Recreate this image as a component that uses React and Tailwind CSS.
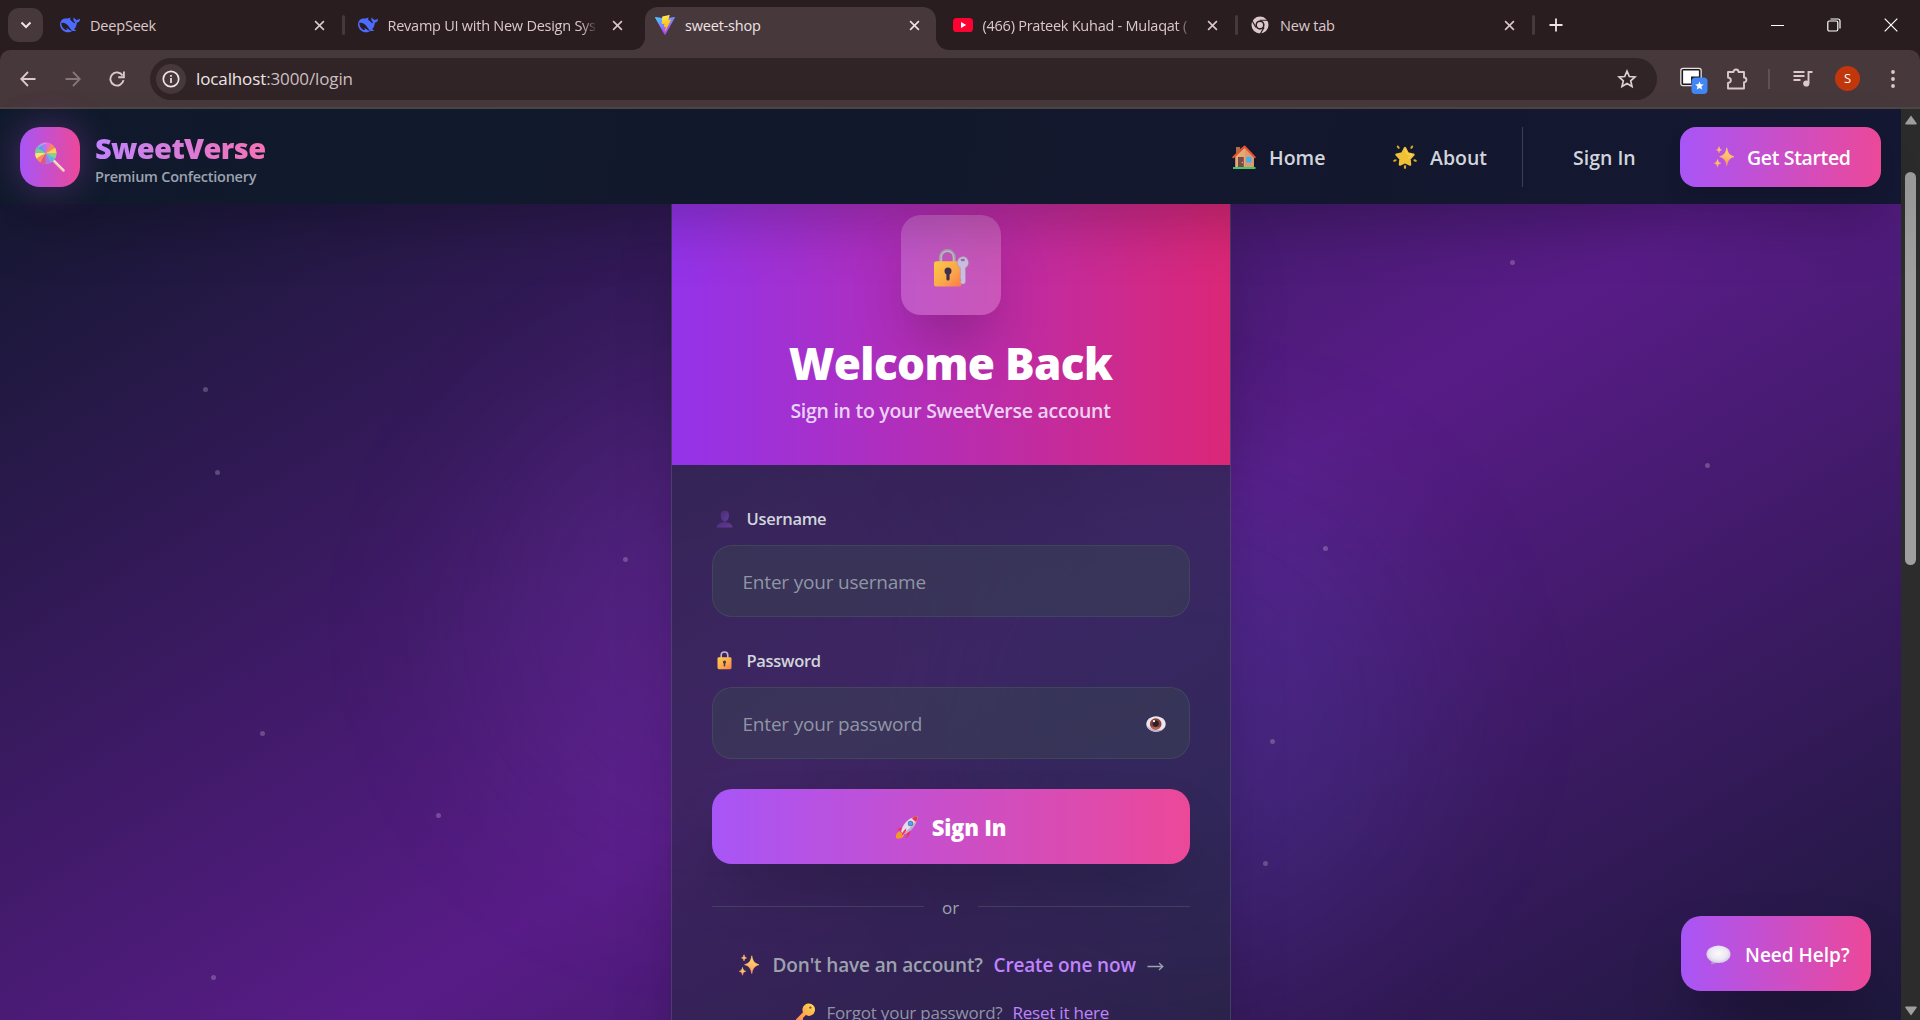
import React from "react";

/* ---------- favicons and browser glyphs ---------- */

function DeepSeekIcon() {
  return (
    <svg viewBox="0 0 24 24" className="h-5 w-5 shrink-0" fill="#4d6bfe" fillRule="evenodd">
      <path d="M23.748 4.482c-.254-.124-.364.113-.512.234-.051.039-.094.09-.137.136-.372.397-.806.657-1.373.626-.829-.046-1.537.214-2.163.848-.133-.782-.575-1.248-1.247-1.548-.352-.156-.708-.311-.955-.65-.172-.241-.219-.51-.305-.774-.055-.16-.11-.323-.293-.35-.2-.031-.278.136-.356.276-.313.572-.434 1.202-.422 1.84.027 1.436.633 2.58 1.838 3.393.137.093.172.187.129.323-.082.28-.18.552-.266.833-.055.179-.137.217-.329.14a5.526 5.526 0 01-1.736-1.18c-.857-.828-1.631-1.742-2.597-2.458a11.365 11.365 0 00-.689-.471c-.985-.957.13-1.743.388-1.836.27-.098.093-.432-.779-.428-.872.004-1.67.295-2.687.684a3.055 3.055 0 01-.465.137 9.597 9.597 0 00-2.883-.102c-1.885.21-3.39 1.102-4.497 2.623C.082 8.606-.231 10.684.152 12.85c.403 2.284 1.569 4.175 3.36 5.653 1.858 1.533 3.997 2.284 6.438 2.14 1.482-.085 3.133-.284 4.994-1.86.47.234.962.327 1.78.397.63.059 1.236-.03 1.705-.128.735-.156.684-.837.419-.961-2.155-1.004-1.682-.595-2.113-.926 1.096-1.296 2.746-2.642 3.392-7.003.05-.347.007-.565 0-.845-.004-.17.035-.237.23-.256a4.173 4.173 0 001.545-.475c1.396-.763 1.96-2.015 2.093-3.517.02-.23-.004-.467-.247-.588zM11.581 18c-2.089-1.642-3.102-2.183-3.52-2.16-.392.024-.321.471-.235.763.09.288.207.486.371.739.114.167.192.416-.113.603-.673.416-1.842-.14-1.897-.167-1.361-.802-2.5-1.86-3.301-3.307-.774-1.393-1.224-2.887-1.298-4.482-.02-.386.093-.522.477-.592a4.696 4.696 0 011.529-.039c2.132.312 3.946 1.265 5.468 2.774.868.86 1.525 1.887 2.202 2.891.72 1.066 1.494 2.082 2.48 2.914.348.292.625.514.891.677-.802.09-2.14.11-3.054-.614z" />
      <path d="M12.6 11.4l1.7.5.3 1.4-.9.5z" fill="#4d6bfe" />
    </svg>
  );
}

function ViteIcon() {
  return (
    <svg viewBox="0 0 24 24" className="h-5 w-5 shrink-0">
      <defs>
        <linearGradient id="viteBody" x1="0" y1="0" x2="0.6" y2="1">
          <stop offset="0" stopColor="#41d1ff" />
          <stop offset="1" stopColor="#bd34fe" />
        </linearGradient>
        <linearGradient id="viteBolt" x1="0.4" y1="0" x2="0.6" y2="1">
          <stop offset="0" stopColor="#ffea83" />
          <stop offset="0.2" stopColor="#ffdd35" />
          <stop offset="1" stopColor="#ffa800" />
        </linearGradient>
      </defs>
      <path d="M23.8 3.2 12.6 23.3c-.3.5-1 .5-1.2 0L.1 3.2c-.3-.5.2-1 .7-.9L12 4.3l11.1-2c.5-.1 1 .4.7.9z" fill="url(#viteBody)" />
      <path d="M17.2.1 9 1.7c-.2 0-.3.2-.3.3L8.200 10.500c0 .2.200.4.400.400l2.300-.5c.2-.1.400.1.400.4l-.7 3.300c0 .2.200.4.400.4l1.400-.5c.300-.1.500.200.500.400l-1.100 5.200c-.1.300.4.500.5.200L19 6.200c.1-.3-.1-.5-.4-.5l-2.300.5c-.3 0-.4-.2-.4-.4l1.700-5.300c.1-.2-.1-.4-.4-.4z" fill="url(#viteBolt)" />
    </svg>
  );
}

function YouTubeIcon() {
  return (
    <svg viewBox="0 0 20 20" className="h-5 w-5 shrink-0">
      <rect x="0" y="3" width="20" height="14" rx="3.6" fill="#ff0033" />
      <path d="M8 7v6l5.2-3z" fill="#fff" />
    </svg>
  );
}

function ChromeIcon() {
  return (
    <svg viewBox="0 0 24 24" className="h-5 w-5 shrink-0" fill="none" stroke="#dcc8cb">
      <circle cx="12" cy="12" r="7.6" strokeWidth="5.2" />
      <circle cx="12" cy="12" r="3.7" fill="#dcc8cb" stroke="none" />
      <path d="M12 6.3h9.500M7.100 14.900 2.400 6.700M16.900 14.900l-4.800 8.200" stroke="#291d1f" strokeWidth="1.4" />
      <circle cx="12" cy="12" r="4.8" stroke="#291d1f" strokeWidth="1.3" />
    </svg>
  );
}

function Cross({ className }) {
  return (
    <svg viewBox="0 0 12 12" className={className} fill="none" stroke="currentColor" strokeWidth="1.7">
      <path d="M1.2 1.2l9.6 9.6M10.8 1.2l-9.6 9.6" />
    </svg>
  );
}

/* ---------- pictograms ---------- */

function Lollipop() {
  const colors = ["#e86bd6", "#f58a5c", "#fbd264", "#7ed491", "#5fb3f0", "#9d7cf0", "#d9568f", "#f58a5c", "#fbe27a", "#6fcf9a", "#5a9ff0", "#b07af0"];
  return (
    <svg viewBox="0 0 32 32" className="h-[32px] w-[32px]">
      <path d="M19.5 19.5 29.5 29.5" stroke="#f3cdb0" strokeWidth="2.6" strokeLinecap="round" />
      <path d="M19.8 18.9 29.8 28.9" stroke="#fdeee0" strokeWidth="1" strokeLinecap="round" />
      <circle cx="11.8" cy="12.2" r="10.7" fill="#f58a5c" />
      {colors.map((c, i) => (
        <path key={i} d="M11.8 12.2Q12.5 6 11.8 1.5A10.7 10.7 0 0 1 17.15 2.93Q15 8 11.8 12.2Z" fill={c} transform={`rotate(${i * 30} 11.8 12.2)`} />
      ))}
      <path d="M4 7a9.5 9.5 0 0 1 8-4.5" stroke="#fff" strokeOpacity=".3" strokeWidth="1.2" fill="none" />
    </svg>
  );
}

function House() {
  return (
    <svg viewBox="0 0 24 24" className="h-6 w-6 shrink-0">
      <path d="M4 2h4.2v8H4z" fill="#a8714b" />
      <path d="M3.2 11.2 13 2.2l8.8 9V22.5H3.2z" fill="#e6a877" />
      <path d="M13 2.2l8.8 9V22.5H13z" fill="#dc9c6d" />
      <path d="M1.3 12.2 12.5 1.5l10.2 10.7" fill="none" stroke="#e8512f" strokeWidth="2" strokeLinecap="round" strokeLinejoin="round" />
      <path d="M6 12h5.8v10.5H6z" fill="#7a4a45" />
      <circle cx="10.3" cy="17.5" r=".7" fill="#e0b080" />
      <path d="M14.3 12h5.2v5.5h-5.2z" fill="#3db1fa" />
      <path d="M1 22h22.5v2H1z" fill="#3fc96a" />
    </svg>
  );
}

function GlowingStar() {
  return (
    <svg viewBox="0 0 24 24" className="h-6 w-6 shrink-0">
      <path d="M12 3l2.700 5.400 5.800 1.200-4 4.200.6 5.800-5.100-2.400-5.100 2.400.6-5.800-4-4.200 5.800-1.200z" fill="#efc136" stroke="#efc136" strokeWidth="2.4" strokeLinejoin="round" />
      <path d="M12 4l2 4.8 5 1.2-4 3.5" fill="none" stroke="#ffd95a" strokeWidth="1" />
      <g fill="#dfa823">
        <ellipse cx="5.2" cy="2.2" rx="1.1" ry="1.9" transform="rotate(-35 5.2 2.2)" />
        <ellipse cx="18.8" cy="2.2" rx="1.1" ry="1.9" transform="rotate(35 18.8 2.2)" />
        <ellipse cx="1.9" cy="15.5" rx="1.1" ry="1.8" transform="rotate(65 1.9 15.5)" />
        <ellipse cx="22.1" cy="15.5" rx="1.1" ry="1.8" transform="rotate(-65 22.1 15.5)" />
        <ellipse cx="12" cy="22" rx="1.2" ry="2" />
      </g>
    </svg>
  );
}

function Sparkles() {
  return (
    <svg viewBox="0 0 22 22" className="h-[22px] w-[22px] shrink-0">
      <defs>
        <linearGradient id="spark" x1="0.6" y1="0" x2="0.3" y2="1">
          <stop offset="0" stopColor="#ffd860" />
          <stop offset="0.5" stopColor="#ffbd6a" />
          <stop offset="1" stopColor="#fb8d5c" />
        </linearGradient>
      </defs>
      <g fill="url(#spark)" stroke="url(#spark)" strokeWidth=".6" strokeLinejoin="round">
        <path d="M13.8 1.8c.9 5 2.2 7.4 7.2 8.9-5 1.5-6.3 4-7.2 9-.9-5-2.2-7.5-7.2-9 5-1.5 6.3-3.9 7.2-8.9z" />
        <path d="M6 .8c.3 1.7.8 2.6 2.5 3.1C6.8 4.4 6.3 5.3 6 7c-.3-1.700-.8-2.6-2.5-3.1C5.2 3.4 5.7 2.5 6 .8z" />
        <path d="M4.500 13.500c.4 2.300 1.100 3.200 3.200 3.800-2.100.6-2.800 1.600-3.200 3.900-.4-2.300-1.100-3.300-3.200-3.900 2.100-.6 2.800-1.500 3.200-3.800z" />
      </g>
    </svg>
  );
}

function LockWithKey() {
  return (
    <svg viewBox="0 0 36 38" className="h-[38px] w-9">
      <defs>
        <linearGradient id="lockGold" x1="0" y1="0" x2="1" y2="1">
          <stop offset="0" stopColor="#ffcf45" />
          <stop offset="0.6" stopColor="#fca64a" />
          <stop offset="1" stopColor="#fb7a4c" />
        </linearGradient>
      </defs>
      <path d="M7.7 15V8.300a6.700 6.700 0 0 1 13.400 0v6.700" fill="none" stroke="#a9a3ad" strokeWidth="3.2" />
      <path d="M8.200 13V8.300a6.200 6.200 0 0 1 12.400 0V13" fill="none" stroke="#c6c2ca" strokeWidth="1.2" />
      <rect x="1" y="12.3" width="27.5" height="25.2" rx="2.6" fill="url(#lockGold)" />
      <circle cx="15" cy="22" r="3.5" fill="#40304f" />
      <path d="M13.4 24h3.2v6a1.6 1.6 0 0 1-3.2 0z" fill="#40304f" />
      <path d="M29.8 7.6a6 6 0 0 1 2.7 11.2V32.5a2.6 2.6 0 0 1-5.2 0l.9-1.6-.9-1.5V18.8A6 6 0 0 1 29.8 7.6z" fill="#cdbfe0" stroke="#a48bb5" strokeWidth=".5" />
      <ellipse cx="29.8" cy="11" rx="2.2" ry="1.3" fill="#9570a8" />
    </svg>
  );
}

function Bust() {
  return (
    <svg viewBox="0 0 17 18" className="h-[18px] w-[17px] shrink-0">
      <defs>
        <linearGradient id="bust" x1="0" y1="0" x2="1" y2="1">
          <stop offset="0" stopColor="#492f70" />
          <stop offset="1" stopColor="#643a9c" />
        </linearGradient>
      </defs>
      <path d="M8.8.8c2.8 0 4.400 1.600 4.200 4.500-.1 3.400-1.600 6-4.200 6s-4.100-2.600-4.200-6C4.400 2.400 6 .8 8.800.8z" fill="url(#bust)" />
      <path d="M.5 17.500C1 14.500 3.300 12.900 6 12.400l2.800-1 2.600 1c2.800.5 4.800 2.100 5.300 5.100z" fill="url(#bust)" />
    </svg>
  );
}

function Lock() {
  return (
    <svg viewBox="0 0 16 19" className="h-[19px] w-[17px] shrink-0">
      <path d="M4.7 7V4.3a3.3 3.3 0 0 1 6.6 0V7" fill="none" stroke="#c5b6cf" strokeWidth="1.6" />
      <rect x="1" y="6.2" width="14" height="12" rx="1.4" fill="url(#lockGold)" />
      <circle cx="8" cy="11" r="1.6" fill="#4b3557" />
      <path d="M7.2 11.5h1.6v3.2a.8.8 0 0 1-1.6 0z" fill="#4b3557" />
    </svg>
  );
}

function Eye() {
  return (
    <svg viewBox="0 0 20 16" className="mt-[2px] h-4 w-5">
      <path d="M10 .3c5.500 0 9.700 3.700 9.700 7.700s-4 7.700-9.700 7.700S.3 12 .3 8 4.500.3 10 .3z" fill="#ece6f0" />
      <path d="M.5 9c.6 3.800 4.600 6.700 9.500 6.700 3 0 5.800-1 7.600-2.800-2.500 1-6 1.300-9 .6C5 12.800 2 11.300.5 9z" fill="#c5b1cf" />
      <circle cx="9.7" cy="8" r="5.8" fill="#8a4338" />
      <path d="M4.500 10a5.800 5.800 0 0 0 10.400 0c-2 1.700-8 1.700-10.400 0z" fill="#b5694c" />
      <circle cx="9.7" cy="7.6" r="3.1" fill="#2f1d2c" />
      <circle cx="8" cy="5.2" r="1.1" fill="#fff" />
    </svg>
  );
}

function Rocket() {
  return (
    <svg viewBox="0 0 24 24" className="h-6 w-6 shrink-0">
      <path d="M1 23.300c-.6-3 .8-6.800 3.900-6.800l4 3.500c0 2.700-4.500 4.500-7.900 3.300z" fill="#f59a26" />
      <path d="M8.800 12.200c-3-.3-5.300.8-6.700 2.800l4.700.7zM12.300 16.200c.3 2.800-.5 4.800-2 7.300 3-1.300 5.500-4.600 4.900-8.800z" fill="#f2305f" />
      <path d="M6.200 16.500C7.500 9.500 13 2.500 22.500 1.300 22 10.500 15.500 16.800 8.700 19.300z" fill="#e2dcec" />
      <path d="M8.700 19.300C15.500 16.800 22 10.500 22.500 1.300 20 9 14 15 7.500 18z" fill="#b9aecb" />
      <path d="M17 2.900c1.700-.8 3.500-1.300 5.500-1.600-.1 1.900-.5 3.700-1.200 5.400-1.600-.6-3.500-2-4.300-3.800z" fill="#f23340" />
      <circle cx="15.500" cy="8.500" r="2.700" fill="#6d6b9c" />
      <circle cx="15.500" cy="8.500" r="2" fill="#47a9f3" />
      <path d="M6.500 20.500c1-3 2.500-5.500 4.700-7.200.2 3-1.700 5.600-4.700 7.200z" fill="#f2305f" />
    </svg>
  );
}

function Key() {
  return (
    <svg viewBox="0 0 20 20" className="h-5 w-5 shrink-0">
      <defs>
        <linearGradient id="keyGold" x1="1" y1="0" x2="0" y2="1">
          <stop offset="0" stopColor="#ffdc4e" />
          <stop offset="1" stopColor="#ff8350" />
        </linearGradient>
      </defs>
      <path d="M13.3.5a6.200 6.200 0 1 1-2.500 11.600L8 15l-.2 2.200-2.200.2L4 19.300H1v-3L8 9.300A6.200 6.200 0 0 1 13.300.5z" fill="url(#keyGold)" />
      <circle cx="15.300" cy="4.600" r="1.200" fill="#7b5b36" />
    </svg>
  );
}

function SpeechBubble() {
  return (
    <svg viewBox="0 0 25 20" className="mt-[2px] h-5 w-[25px] shrink-0">
      <defs>
        <radialGradient id="bubble" cx="0.5" cy="0.45" r="0.6">
          <stop offset="0" stopColor="#fbfafc" />
          <stop offset="0.6" stopColor="#ece8f2" />
          <stop offset="1" stopColor="#c9c0dc" />
        </radialGradient>
      </defs>
      <path d="M5.300 14.500v5l6-2z" fill="#b39ccb" />
      <ellipse cx="12.500" cy="9.300" rx="12" ry="8.800" fill="url(#bubble)" />
    </svg>
  );
}

/* ---------- browser chrome ---------- */

const tabs = [
  { title: "DeepSeek", icon: <DeepSeekIcon />, divider: true },
  { title: "Revamp UI with New Design Sys", icon: <DeepSeekIcon />, fade: true },
  { title: "sweet-shop", icon: <ViteIcon />, active: true },
  { title: "(466) Prateek Kuhad - Mulaqat (", icon: <YouTubeIcon />, divider: true, fade: true },
  { title: "New tab", icon: <ChromeIcon />, divider: true },
];

function Tab({ tab }) {
  return (
    <div className="relative flex h-[50px] w-[297.5px] shrink-0 items-end pr-[3.5px] pl-[3.5px]">
      {tab.active && (
        <>
          <svg viewBox="0 0 13 13" className="absolute bottom-0 -left-[9.5px] h-[13px] w-[13px]" fill="#47383b"><path d="M13 0v13H0A13 13 0 0 0 13 0z" /></svg>
          <svg viewBox="0 0 13 13" className="absolute -right-[9.5px] bottom-0 h-[13px] w-[13px]" fill="#47383b"><path d="M0 0v13h13A13 13 0 0 1 0 0z" /></svg>
        </>
      )}
      <div className={"flex h-[43px] w-full items-center rounded-t-[13px] pb-[7px] pl-[10px] " + (tab.active ? "bg-[#47383b] text-[#eee4e6]" : "text-[#dcc8cb]")}>
        {tab.icon}
        <span className={"mt-px ml-[10px] w-[210px] overflow-hidden text-[14.5px] leading-5 whitespace-nowrap " + (tab.fade ? "tracking-[-0.25px] [mask-image:linear-gradient(to_right,black_92%,transparent)]" : "tracking-[-0.2px]")}>{tab.title}</span>
        <Cross className="ml-[14px] h-[11px] w-[11px]" />
      </div>
      {tab.divider && <span className="absolute top-[15px] -right-px h-5 w-[3px] rounded bg-[#47383b]" />}
    </div>
  );
}

function TabStrip() {
  return (
    <div className="flex h-[50px] shrink-0 items-center bg-[#291d1f]">
      <button className="mr-[3.5px] ml-2 flex h-[34px] w-[35px] items-center justify-center rounded-[11px] bg-[#47383b]">
        <svg viewBox="0 0 12 8" className="h-2 w-3" fill="none" stroke="#eee4e6" strokeWidth="2"><path d="M1.500 1.500 6 6l4.500-4.500" /></svg>
      </button>
      {tabs.map((t) => <Tab key={t.title} tab={t} />)}
      <svg viewBox="0 0 14 14" className="ml-[15px] h-[14px] w-[14px]" fill="none" stroke="#eee4e6" strokeWidth="1.8"><path d="M7 .5v13M.5 7h13" /></svg>
      <div className="mr-[22px] ml-auto flex items-center gap-[43px]">
        <span className="h-px w-[13px] bg-white" />
        <svg viewBox="0 0 14 14" className="h-[14px] w-[14px]" fill="none" stroke="#fff" strokeWidth="1.2"><rect x=".8" y="3" width="10" height="10" rx="1.5" /><path d="M3.500 1h7.500a2 2 0 0 1 2 2v7.500" /></svg>
        <svg viewBox="0 0 14 14" className="h-[14px] w-[14px]" fill="none" stroke="#fff" strokeWidth="1.2"><path d="M.7.7l12.600 12.600M13.300.7.7 13.300" /></svg>
      </div>
    </div>
  );
}

function Toolbar() {
  return (
    <div className="shrink-0 bg-[#291d1f]">
      <div className="flex h-[59px] items-center rounded-t-[10px] border-b-2 border-[#4b4744] bg-[#47383b] text-[#dcc8cb]">
        <svg viewBox="0 0 16 16" className="ml-5 h-4 w-4" fill="none" stroke="currentColor" strokeWidth="1.8"><path d="M8 1 1.200 8 8 15M1.500 8H15.500" /></svg>
        <svg viewBox="0 0 16 16" className="ml-[29px] h-4 w-4 text-[#877679]" fill="none" stroke="currentColor" strokeWidth="1.8"><path d="M8 1l6.800 7L8 15M14.500 8H.5" /></svg>
        <svg viewBox="0 0 16 16" className="ml-[28px] h-4 w-4" fill="none" stroke="currentColor" strokeWidth="1.9"><path d="M13.600 4.500A6.600 6.600 0 1 0 14.500 9.200M14.900 .5v5.700H9.200" /></svg>
        <div className="ml-[25px] flex h-[42px] w-[1507px] items-center rounded-full bg-[#302426]">
          <span className="ml-[6px] flex h-[30px] w-[30px] items-center justify-center rounded-full bg-[#47383b]">
            <svg viewBox="0 0 18 18" className="h-[18px] w-[18px]" fill="none" stroke="#eee4e6" strokeWidth="1.7"><circle cx="9" cy="9" r="7.700" /><path d="M9 8v5M9 5v1.700" /></svg>
          </span>
          <span className="mt-px ml-[10px] text-[17px] tracking-[-0.12px] text-[#eee4e6]">localhost<span className="text-[#cdbfc1]">:3000/login</span></span>
          <svg viewBox="0 0 20 20" className="mr-5 ml-auto h-5 w-5" fill="none" stroke="#dcd0d2" strokeWidth="1.7"><path d="M10 2.200l2.300 5.300 5.700.5-4.300 3.800 1.300 5.600-5-3-5 3 1.300-5.600L2 8l5.700-.5z" /></svg>
        </div>
        <svg viewBox="0 0 29 28" className="mt-1 ml-[22px] h-7 w-[29px]">
          <rect x="2.500" y="2" width="19" height="16" rx="1.500" fill="#fff" stroke="#e9dfe1" strokeWidth="2.600" />
          <rect x="3.300" y="2.800" width="17.400" height="14.400" rx=".8" fill="#fff" stroke="#1b1b1f" strokeWidth="1.600" />
          <path d="M12 9.500h9v8h-9z" fill="#1b1b1f" />
          <rect x="12.500" y="10.500" width="16" height="16.500" rx="4" fill="#4286f5" />
          <path d="M20.500 14.500l1.200 2.800 3 .2-2.300 2 .8 3-2.700-1.600-2.700 1.600.7-3-2.300-2 3.100-.2z" fill="#fff" />
        </svg>
        <svg viewBox="0 0 22 22" className="ml-[18px] h-[22px] w-[22px]" fill="none" stroke="currentColor" strokeWidth="1.9" strokeLinejoin="round"><path d="M2 4h5.500a2.500 2.500 0 0 1 5 0h5.500v5.500a2.400 2.400 0 0 1 0 4.800V20.500H2V15c3.800-.5 3.800-5 0-5.500z" /></svg>
        <span className="ml-[20px] h-5 w-[2px] bg-[#63514f]" />
        <svg viewBox="0 0 20 18" className="ml-[23px] h-[18px] w-5" fill="none" stroke="currentColor" strokeWidth="1.9"><path d="M.5 2h11M.5 6h11M.5 10h7M19.500 2h-4v11" /><circle cx="13.300" cy="13.500" r="3.100" fill="currentColor" stroke="none" /></svg>
        <span className="ml-[22px] flex h-[25px] w-[25px] items-center justify-center rounded-full bg-[#c2360c] text-[13px] text-white">S</span>
        <svg viewBox="0 0 4 18" className="ml-[31px] h-[18px] w-1" fill="currentColor"><circle cx="2" cy="2" r="1.9" /><circle cx="2" cy="9" r="1.9" /><circle cx="2" cy="16" r="1.9" /></svg>
      </div>
    </div>
  );
}

function Scrollbar() {
  return (
    <div className="flex w-[19px] shrink-0 flex-col items-center justify-between bg-[#2c2c2c] pt-[6px] pb-1">
      <svg viewBox="0 0 12 10" className="h-[10px] w-3" fill="#9f9f9f"><path d="M6 .5 11.800 8.500q0 1-1 1H1.200q-1 0-1-1z" /></svg>
      <span className="mt-[47px] h-[393px] w-[11px] rounded-full bg-[#9f9f9f]" />
      <svg viewBox="0 0 12 10" className="mt-auto h-[10px] w-3" fill="#9f9f9f"><path d="M6 9.500 11.800 1.500q0-1-1-1H1.200q-1 0-1 1z" /></svg>
    </div>
  );
}

/* ---------- page ---------- */

function Navbar() {
  return (
    <nav className="relative z-10 flex h-[95px] shrink-0 items-center bg-[linear-gradient(100deg,#101a2c,#12182c_45%,#141731)] pr-5 pl-5 text-[19.5px] font-semibold text-[#d1d5db] shadow-[0_31px_62px_-15px_rgba(0,0,0,0.25)]">
      <div className="flex h-[60px] w-[60px] items-center justify-center rounded-[20px] bg-linear-to-r/srgb from-[#a855f7] to-[#ec4899] shadow-[0_0_36px_rgba(192,80,220,0.33)]">
        <Lollipop />
      </div>
      <div className="mt-[3px] ml-[15px] flex flex-col">
        <span className="bg-linear-to-r/srgb from-[#c084fc] to-[#f472b6] bg-clip-text text-[29px] leading-[37px] font-extrabold tracking-[-0.65px] text-transparent">SweetVerse</span>
        <span className="mt-px text-[14.5px] leading-5 tracking-[-0.25px] text-[#9ca3af]">Premium Confectionery</span>
      </div>
      <div className="ml-auto flex items-center">
        <House />
        <span className="mt-[2px] ml-[13px] w-[57px]">Home</span>
        <span className="ml-[67px] flex"><GlowingStar /></span>
        <span className="mt-[2px] ml-[13px] w-[57px]">About</span>
        <span className="ml-[35px] h-[60px] w-px bg-[#374151]" />
        <span className="mt-[2px] ml-[50px] w-[62px] whitespace-nowrap">Sign In</span>
        <span className="ml-[45px] flex h-[60px] w-[201px] items-center rounded-[16px] bg-linear-to-r/srgb from-[#a855f7] to-[#ec4899] pl-[33px] tracking-[-0.35px] text-white shadow-[0_12px_19px_-4px_rgba(0,0,0,0.12)]">
          <Sparkles />
          <span className="mt-[2px] ml-[12px] whitespace-nowrap">Get Started</span>
        </span>
      </div>
    </nav>
  );
}

/* Faint particles, placed as [x, y] on the backdrop */
const particles = [[203, 183], [215, 266], [623, 353], [260, 527], [436, 609], [211, 771], [1510, 56], [1705, 259], [1323, 342], [1270, 535], [1263, 657]];

function Backdrop() {
  return (
    <div className="absolute inset-0 overflow-hidden bg-[linear-gradient(to_bottom_right,#0f172a,#581c87,#0f172a)] bg-[size:1901px_1145px] bg-[position:0_-109px]">
      <div className="absolute top-[177px] left-[475px] h-[480px] w-[480px] rounded-full bg-[#a855f7]/10 blur-[80px]" />
      <div className="absolute top-[270px] left-[946px] h-[480px] w-[480px] rounded-full bg-[#3b82f6]/10 blur-[80px]" />
      {particles.map(([x, y]) => (
        <span key={x} className="absolute h-[5px] w-[5px] rounded-full bg-white/22" style={{ left: x, top: y }} />
      ))}
    </div>
  );
}

function Field({ icon, label, placeholder, children }) {
  return (
    <div className="flex flex-col">
      <label className="flex h-[25px] items-center pl-[4px] text-[16.5px] font-semibold tracking-[-0.3px] text-[#d1d5db]">
        {icon}
        <span className="mt-[2px] ml-[14px]">{label}</span>
      </label>
      <div className="mt-[14px] flex h-[72px] items-center justify-between rounded-[20px] border border-[#4b5563]/50 bg-[#374151]/50 pr-[23px] pl-[30px]">
        <span className="mt-[2px] text-[19px] tracking-[-0.2px] text-[#9ca3af]/90">{placeholder}</span>
        {children}
      </div>
    </div>
  );
}

function LoginCard() {
  return (
    <section className="relative flex h-[900px] w-[560px] shrink-0 flex-col border-x border-[#4b5563]/60 shadow-[0_31px_62px_-15px_rgba(0,0,0,0.25)]">
      <header className="flex h-[261px] shrink-0 flex-col items-center bg-linear-to-r/srgb from-[#9333ea] to-[#db2777] pt-[11px]">
        <div className="flex h-[100px] w-[100px] items-center justify-center rounded-[20px] bg-white/20 pt-[5px] shadow-[0_31px_62px_-15px_rgba(0,0,0,0.3)]">
          <LockWithKey />
        </div>
        <h1 className="mt-[20px] text-[44px] leading-[56px] font-extrabold tracking-[-0.65px] whitespace-nowrap text-white">Welcome Back</h1>
        <p className="mt-[5px] text-[19.5px] leading-[30px] font-semibold tracking-[-0.28px] whitespace-nowrap text-[#f3e8ff]/90">Sign in to your SweetVerse account</p>
      </header>
      <div className="flex grow flex-col bg-[#1f2937]/50 px-10 pt-[41px]">
        <div className="flex flex-col gap-[31px]">
          <Field icon={<Bust />} label="Username" placeholder="Enter your username" />
          <Field icon={<Lock />} label="Password" placeholder="Enter your password">
            <Eye />
          </Field>
        </div>
        <button className="mt-[30px] flex h-[75px] shrink-0 items-center justify-center rounded-[20px] bg-linear-to-r/srgb from-[#a855f7] to-[#ec4899] text-[22px] font-extrabold tracking-[-0.2px] text-white shadow-[0_31px_62px_-15px_rgba(0,0,0,0.25)]">
          <Rocket />
          <span className="mt-px ml-[13px]">Sign In</span>
        </button>
        <div className="mt-[30px] flex h-[25px] items-center text-[#9ca3af]">
          <span className="h-px w-[212px] bg-[#4b5563]/60" />
          <span className="grow pt-[3px] text-center text-[17px]">or</span>
          <span className="h-px w-[212px] bg-[#4b5563]/60" />
        </div>
        <p className="mt-[31px] flex h-[30px] items-center justify-center text-[19px] font-semibold tracking-[-0.15px] whitespace-nowrap text-[#9ca3af]">
          <Sparkles />
          <span className="ml-[13px] w-[212px]">Don't have an account?</span>
          <span className="ml-[9px] w-[143px] text-[#c084fc]">Create one now</span>
          <svg viewBox="0 0 17 9" className="mt-[3px] ml-[10px] h-[9px] w-[17px]" fill="none" stroke="#9ca3af" strokeWidth="1.3"><path d="M.5 4.500h15M12 1l3.800 3.500L12 8" /></svg>
        </p>
        <p className="mt-[20px] flex h-[26px] items-center justify-center pl-[3px] text-[17px] tracking-[-0.22px] whitespace-nowrap text-[#9ca3af]/90">
          <Key />
          <span className="ml-[12px] w-[177px]">Forgot your password?</span>
          <span className="ml-[9px] w-[97px] text-[#c084fc]">Reset it here</span>
        </p>
      </div>
    </section>
  );
}

export default function App() {
  return (
    <div className="flex h-[1020px] w-[1920px] flex-col overflow-hidden bg-[#0f172a] font-['Open_Sans',sans-serif]">
      <TabStrip />
      <Toolbar />
      <div className="flex min-h-0 grow">
        <div className="flex w-[1901px] flex-col">
          <Navbar />
          <main className="relative flex min-h-0 grow justify-center overflow-hidden">
            <Backdrop />
            <LoginCard />
            <button className="absolute right-[30px] bottom-[29px] flex h-[75px] w-[190px] items-center rounded-[20px] bg-linear-to-r/srgb from-[#a855f7] to-[#ec4899] pl-[25px] text-[19px] font-semibold text-white shadow-[0_31px_62px_-15px_rgba(0,0,0,0.35)]">
              <SpeechBubble />
              <span className="mt-[3px] ml-[14px] whitespace-nowrap">Need Help?</span>
            </button>
          </main>
        </div>
        <Scrollbar />
      </div>
    </div>
  );
}
